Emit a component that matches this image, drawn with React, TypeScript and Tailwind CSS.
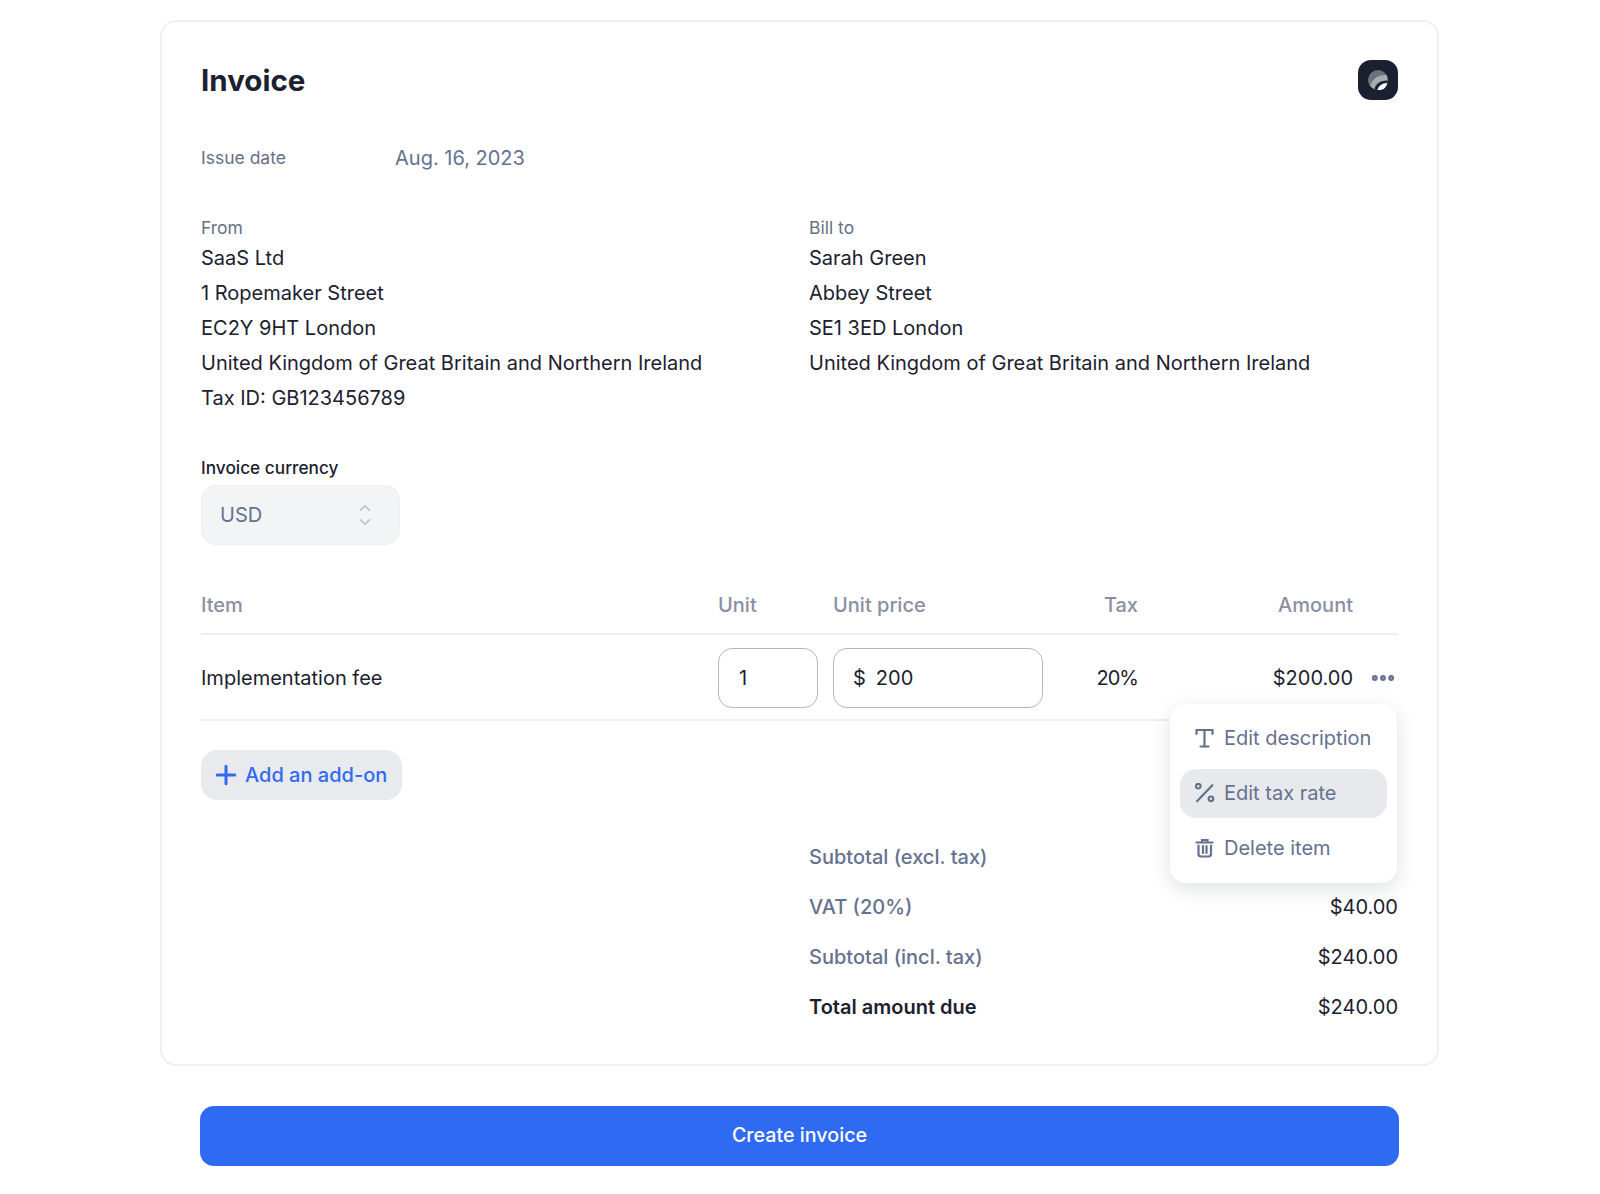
import React from 'react';
import { ChevronUp, ChevronDown, MoreHorizontal, Plus } from 'lucide-react';

const fromLines = [
  'SaaS Ltd',
  '1 Ropemaker Street',
  'EC2Y 9HT London',
  'United Kingdom of Great Britain and Northern Ireland',
  'Tax ID: GB123456789',
];

const billLines = [
  'Sarah Green',
  'Abbey Street',
  'SE1 3ED London',
  'United Kingdom of Great Britain and Northern Ireland',
];

const totals = [
  { label: 'Subtotal (excl. tax)', value: '', bold: false },
  { label: 'VAT (20%)', value: '$40.00', bold: false },
  { label: 'Subtotal (incl. tax)', value: '$240.00', bold: false },
  { label: 'Total amount due', value: '$240.00', bold: true },
];

const Logo = () => (
  <div className="flex h-10 w-10 items-center justify-center rounded-[13px] bg-[#1a2030]">
    <svg width="24" height="24" viewBox="0 0 24 24">
      <circle cx="12" cy="12" r="10" fill="#6f7178" />
      <path d="M4 17.5 C6 11.5 12 6.5 20.5 7 C22.5 11.5 21.5 17 18 20 C14 23 7.5 22.5 4 17.5 Z" fill="#a9abb0" />
      <path d="M8.5 21 C9.5 16 14.5 12 21.8 12.5 C21.5 16.5 19.5 19.5 17 21 C14.5 22.5 11.5 22.5 8.5 21 Z" fill="#1a2030" />
      <path d="M11.5 22 C12 18.5 16 15 21.2 15 C20.5 18.5 18.5 21 15.5 21.8 C14.3 22.1 12.8 22.2 11.5 22 Z" fill="#ffffff" />
    </svg>
  </div>
);

const TextIcon = () => (
  <svg width="20" height="20" viewBox="0 0 20 20" fill="none" stroke="#667190" strokeWidth="2.2" strokeLinecap="round">
    <path d="M1.5 6 V2 H17.5 V6" />
    <path d="M9.5 2 V18.5" />
    <path d="M5.5 18.5 H13.5" />
  </svg>
);

const PercentIcon = () => (
  <svg width="20" height="20" viewBox="0 0 20 20" fill="none" stroke="#667190" strokeWidth="2.2" strokeLinecap="round">
    <path d="M17.3 2.2 L2 18.2" />
    <circle cx="3.3" cy="3.2" r="2.3" />
    <circle cx="16" cy="15.8" r="2.3" />
  </svg>
);

const TrashIcon = () => (
  <svg width="20" height="20" viewBox="0 0 20 20" fill="none" stroke="#667190" strokeWidth="2.2" strokeLinecap="round">
    <path d="M1.5 4.5 H17.5" />
    <path d="M7 4 V2 H12.5 V4" />
    <path d="M3.5 7.5 V16 Q3.5 18.5 6 18.5 H13.5 Q16 18.5 16 16 V7.5" />
    <path d="M8 8 V15 M11.5 8 V15" />
  </svg>
);

export default function App() {
  return (
    <div className="min-h-[1194px] bg-white pt-5 pl-40 font-['Inter',sans-serif] text-[20px] text-[#1c2130]">
      <div className="h-[1046px] w-[1279px] rounded-[16px] border-2 border-[#eff0f2] px-[39px] pt-[38px]">
        <div className="flex h-10 items-center justify-between">
          <h1 className="pt-[1px] text-[29.5px] font-bold">Invoice</h1>
          <Logo />
        </div>

        <div className="mt-[40px] flex h-9 items-center">
          <span className="w-[194px] text-[17.5px] text-[#667085]">Issue date</span>
          <span className="text-[#667190]">Aug. 16, 2023</span>
        </div>

        <div className="mt-[39px] flex">
          <div className="w-[608px]">
            <div className="h-[26px] text-[17.5px] leading-[26px] text-[#667085]">From</div>
            {fromLines.map((line) => (
              <div key={line} className="leading-[35px]">{line}</div>
            ))}
          </div>
          <div>
            <div className="h-[26px] text-[17.5px] leading-[26px] text-[#667085]">Bill to</div>
            {billLines.map((line) => (
              <div key={line} className="leading-[35px]">{line}</div>
            ))}
          </div>
        </div>

        <div className="mt-[39px] text-[17.25px] font-medium leading-[26px]">Invoice currency</div>
        <div className="mt-[4px] flex h-[60px] w-[199px] items-center justify-between rounded-[15px] border border-[#eceef1] bg-[#f3f4f6] pl-[18px] pr-[25px] text-[#667190]">
          <span>USD</span>
          <span className="flex flex-col items-center text-[#bcc0c9]">
            <ChevronUp size={18} strokeWidth={2.2} className="-mb-[2px]" />
            <ChevronDown size={18} strokeWidth={2.2} className="-mt-[2px]" />
          </span>
        </div>

        <div className="relative mt-[30px]">
          <div className="flex h-[60px] items-center border-b-2 border-[#eeeff1] pt-[2px] font-medium text-[#8a8fa3]">
            <div className="w-[517px]">Item</div>
            <div className="w-[115px]">Unit</div>
            <div className="w-[210px]">Unit price</div>
            <div className="w-[95px] text-right">Tax</div>
            <div className="w-[215px] text-right">Amount</div>
          </div>

          <div className="flex h-[86px] items-center border-b-2 border-[#eeeff1] pt-[2px]">
            <div className="w-[517px]">Implementation fee</div>
            <div className="w-[115px]">
              <div className="flex h-[60px] w-[100px] items-center rounded-[14px] border border-[#b3b6bd] pl-5">1</div>
            </div>
            <div className="flex h-[60px] w-[210px] items-center gap-[10px] rounded-[14px] border border-[#b3b6bd] pl-[19px]">
              <span>$</span>
              <span>200</span>
            </div>
            <div className="w-[95px] text-right tracking-[-1px]">20%</div>
            <div className="w-[215px] text-right">$200.00</div>
            <div className="flex flex-1 justify-end">
              <MoreHorizontal size={28} strokeWidth={3} className="mr-[1px] text-[#667190]" />
            </div>
          </div>

          <div className="absolute right-[1px] top-[129px] z-10 flex h-[179px] w-[227px] flex-col justify-center rounded-[16px] bg-white px-[10px] text-[#667190] shadow-[0_6px_20px_rgba(30,40,60,0.14)]">
            <div className="flex h-[49px] items-center gap-[9px] rounded-[16px] pb-[2px] pl-[15px]">
              <TextIcon />
              <span>Edit description</span>
            </div>
            <div className="my-[6px] flex h-[49px] items-center gap-[9px] rounded-[16px] bg-[#e8e9ec] pb-[2px] pl-[15px]">
              <PercentIcon />
              <span>Edit tax rate</span>
            </div>
            <div className="flex h-[49px] items-center gap-[9px] rounded-[16px] pb-[2px] pl-[15px]">
              <TrashIcon />
              <span>Delete item</span>
            </div>
          </div>
        </div>

        <button className="mt-[29px] flex h-[50px] w-[201px] items-center gap-[4px] rounded-[16px] bg-[#e9eaed] pl-[10px] font-medium text-[#2f6bf2]">
          <Plus size={30} strokeWidth={2.4} />
          <span>Add an add-on</span>
        </button>

        <div className="ml-[608px] mt-[32px] flex flex-col">
          {totals.map((row) => (
            <div key={row.label} className="flex h-[50px] items-center justify-between">
              <span className={row.bold ? 'font-semibold' : 'font-medium text-[#667190]'}>{row.label}</span>
              <span>{row.value}</span>
            </div>
          ))}
        </div>
      </div>

      <button className="ml-10 mt-[40px] h-[60px] w-[1199px] rounded-[14px] bg-[#2f6bf2] text-[19.7px] font-medium text-white">
        Create invoice
      </button>
    </div>
  );
}
